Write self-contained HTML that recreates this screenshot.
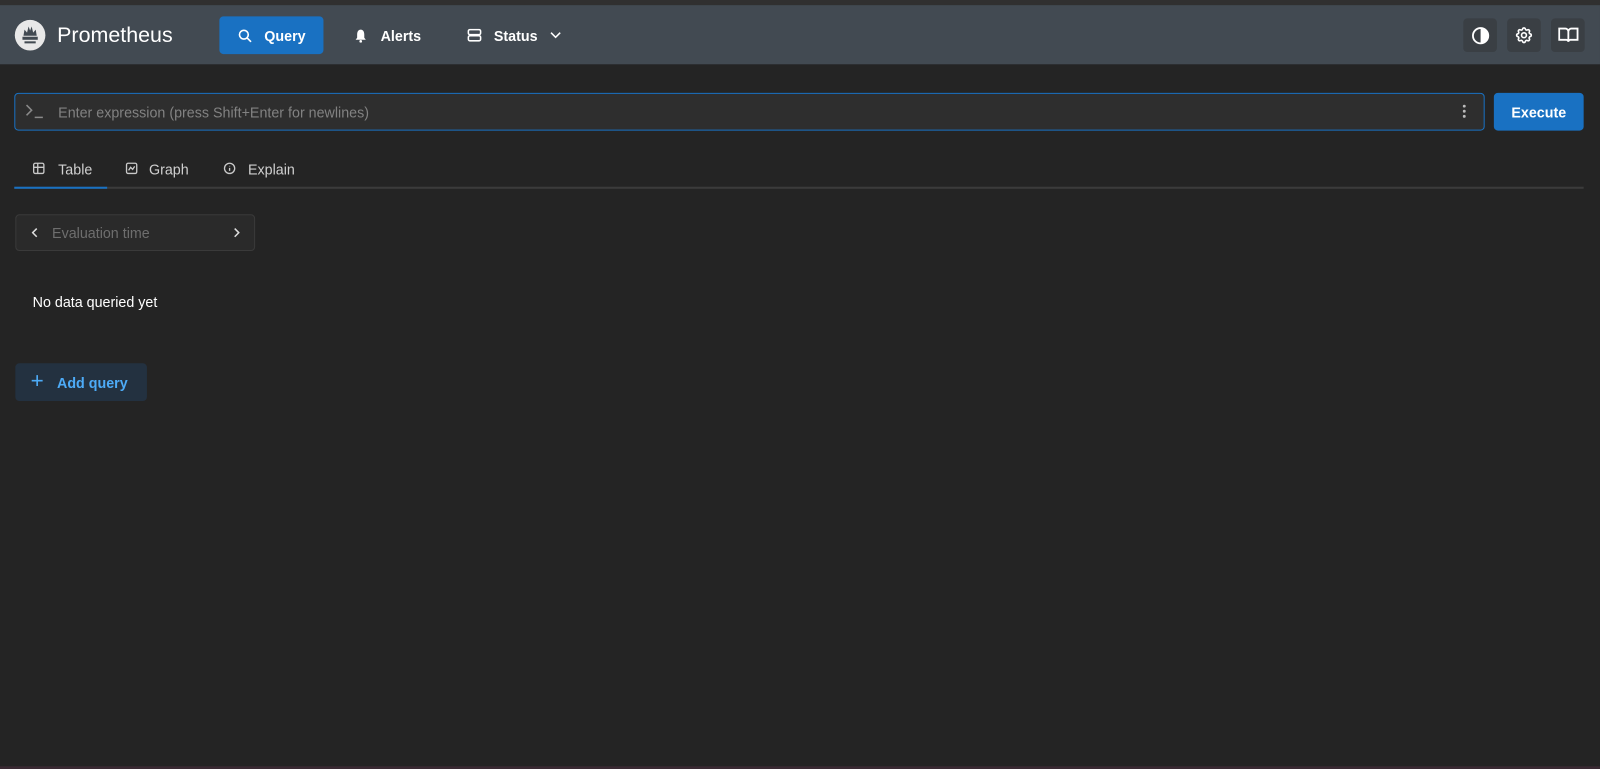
<!DOCTYPE html>
<html><head><style>
*{box-sizing:border-box;margin:0;padding:0}
body{width:1600px;height:769px;background:#242424;font-family:"Liberation Sans",sans-serif;color:#c9c9c9;position:relative;overflow:hidden}
#w{position:absolute;left:0;top:0;width:1568px;height:754px;transform:scale(1.0204);transform-origin:0 0}
.top{position:absolute;left:0;top:0;width:1568px;height:5px;background:#303030}
.hdr{position:absolute;left:0;top:5px;width:1568px;height:58px;background:#424a52}
.abs{position:absolute}
.nav{position:absolute;top:16px;height:37px;display:flex;align-items:center;color:#fff;font-weight:bold;font-size:14px;border-radius:4px}
.ib{position:absolute;top:18px;width:33px;height:33px;border-radius:4px;background:#3a3f44;display:flex;align-items:center;justify-content:center}
svg{display:block}
</style></head><body><div id="w">
<div class="top"></div>
<div class="hdr"></div>
<svg class="abs" style="left:14px;top:19px" width="31" height="31" viewBox="0 0 31 31"><circle cx="15.5" cy="15.5" r="15" fill="#e8e8e8"/><path d="M9 16 L10 10 L12.5 13 L14 7 L15.5 11 L17 7 L18.5 13 L21 10 L22 16 Z" fill="#424a52"/><rect x="8" y="17" width="15" height="3" fill="#424a52"/><rect x="10" y="21.5" width="11" height="2" fill="#424a52"/></svg>
<div class="abs" style="left:56px;top:23px;font-size:21px;color:#fff">Prometheus</div>
<div class="nav" style="left:215px;width:102px;background:#1971c2;padding-left:18px">
<svg width="14" height="14" viewBox="0 0 14 14" fill="none" stroke="#fff" stroke-width="1.6"><circle cx="6" cy="6" r="4.3"/><path d="M9.2 9.2L13 13"/></svg><span style="margin-left:12px">Query</span></div>
<div class="nav" style="left:347px"><svg width="13" height="14" viewBox="0 0 13 14"><path d="M6.5 1C3.8 1 3 3.5 3 6v3L1.5 11h10L10 9V6c0-2.5-.8-5-3.5-5z" fill="#fff"/><circle cx="6.5" cy="12.5" r="1.3" fill="#fff"/></svg><span style="margin-left:13px">Alerts</span></div>
<div class="nav" style="left:458px"><svg width="14" height="13" viewBox="0 0 14 13" fill="none" stroke="#fff" stroke-width="1.5"><rect x="1" y="1" width="12" height="5" rx="1.5"/><rect x="1" y="7" width="12" height="5" rx="1.5"/></svg><span style="margin-left:12px">Status</span>
<svg style="margin-left:12px" width="11" height="7" viewBox="0 0 11 7" fill="none" stroke="#fff" stroke-width="1.5"><path d="M1 1l4.5 4.5L10 1"/></svg></div>
<div class="ib" style="left:1434px"><svg width="18" height="18" viewBox="0 0 18 18"><circle cx="9" cy="9" r="7.5" fill="none" stroke="#fff" stroke-width="1.8"/><path d="M9 1.5a7.5 7.5 0 0 1 0 15z" fill="#fff"/></svg></div>
<div class="ib" style="left:1477px"><svg width="19" height="19" viewBox="0 0 24 24" fill="none" stroke="#fff" stroke-width="2"><path d="M10.3 4.3c.4-1.8 3-1.8 3.4 0a1.7 1.7 0 0 0 2.6 1.1c1.5-.9 3.3.8 2.4 2.4a1.7 1.7 0 0 0 1 2.5c1.8.4 1.8 3 0 3.4a1.7 1.7 0 0 0-1 2.6c.9 1.5-.9 3.3-2.4 2.4a1.7 1.7 0 0 0-2.6 1c-.4 1.8-3 1.8-3.4 0a1.7 1.7 0 0 0-2.6-1c-1.5.9-3.300-.9-2.4-2.4a1.7 1.7 0 0 0-1-2.6c-1.8-.4-1.8-3 0-3.4a1.7 1.7 0 0 0 1-2.5c-.9-1.6.9-3.3 2.4-2.4a1.7 1.7 0 0 0 2.6-1.1z"/><circle cx="12" cy="12" r="3"/></svg></div>
<div class="ib" style="left:1520px"><svg width="20" height="17" viewBox="0 0 20 17" fill="none" stroke="#fff" stroke-width="1.8"><path d="M1 2h6a3 3 0 0 1 3 3v10a2 2 0 0 0-2-2H1zM19 2h-6a3 3 0 0 0-3 3v10a2 2 0 0 1 2-2h7z"/></svg></div>
<div class="abs" style="left:14px;top:91px;width:1441px;height:37px;border:1px solid #1971c2;border-radius:4px;background:#2e2e2e"></div>
<svg class="abs" style="left:25px;top:102px" width="18" height="15" viewBox="0 0 18 15" fill="none" stroke="#8a8a8a" stroke-width="1.5"><path d="M1 1l5 5-5 5M9 13h8"/></svg>
<div class="abs" style="left:57px;top:102px;font-size:14px;color:#828282">Enter expression (press Shift+Enter for newlines)</div>
<svg class="abs" style="left:1433px;top:102px" width="4" height="14"><circle cx="2" cy="2" r="1.4" fill="#bbb"/><circle cx="2" cy="7" r="1.4" fill="#bbb"/><circle cx="2" cy="12" r="1.4" fill="#bbb"/></svg>
<div class="abs" style="left:1464px;top:91px;width:88px;height:37px;border-radius:4px;background:#1971c2;color:#fff;font-weight:bold;font-size:14px;display:flex;align-items:center;justify-content:center">Execute</div>
<div class="abs" style="left:14px;top:183px;width:1538px;height:2px;background:#3b3b3b"></div>
<div class="abs" style="left:14px;top:183px;width:91px;height:2px;background:#1971c2"></div>
<svg class="abs" style="left:32px;top:159px" width="12" height="12" viewBox="0 0 12 12" fill="none" stroke="#c9c9c9" stroke-width="1.3"><rect x="1" y="1" width="10" height="10" rx="1.5"/><path d="M1 5h10M5 1v10"/></svg>
<div class="abs" style="left:57px;top:158px;font-size:14px;color:#d0d0d0">Table</div>
<svg class="abs" style="left:123px;top:159px" width="12" height="12" viewBox="0 0 12 12" fill="none" stroke="#c9c9c9" stroke-width="1.3"><rect x="1" y="1" width="10" height="10" rx="1.5"/><path d="M3 8l2-3 2 2 2-3"/></svg>
<div class="abs" style="left:146px;top:158px;font-size:14px;color:#d0d0d0">Graph</div>
<svg class="abs" style="left:219px;top:159px" width="12" height="12" viewBox="0 0 12 12" fill="none" stroke="#c9c9c9" stroke-width="1.3"><circle cx="6" cy="6" r="5"/><path d="M6 5.5v3M6 3.5v.5"/></svg>
<div class="abs" style="left:243px;top:158px;font-size:14px;color:#d0d0d0">Explain</div>
<div class="abs" style="left:15px;top:210px;width:235px;height:36px;border:1px solid #3a3a3a;border-radius:4px;background:#2a2a2a"></div>
<svg class="abs" style="left:31px;top:223px" width="6" height="10" viewBox="0 0 6 10" fill="none" stroke="#ddd" stroke-width="1.5"><path d="M5 1L1 5l4 4"/></svg>
<div class="abs" style="left:51px;top:220px;font-size:14px;color:#6e6e6e">Evaluation time</div>
<svg class="abs" style="left:229px;top:223px" width="6" height="10" viewBox="0 0 6 10" fill="none" stroke="#ddd" stroke-width="1.5"><path d="M1 1l4 4-4 4"/></svg>
<div class="abs" style="left:32px;top:288px;font-size:14px;color:#fff">No data queried yet</div>
<div class="abs" style="left:15px;top:356px;width:129px;height:37px;border-radius:4px;background:#233140;color:#4dabf7;font-weight:bold;font-size:14px;display:flex;align-items:center"><span style="font-size:22px;font-weight:normal;margin-left:15px;margin-top:-3px">+</span><span style="margin-left:13px">Add query</span></div>
<div class="abs" style="left:0;top:751px;width:1568px;height:3px;background:#3a2a33"></div>
</div></body></html>
